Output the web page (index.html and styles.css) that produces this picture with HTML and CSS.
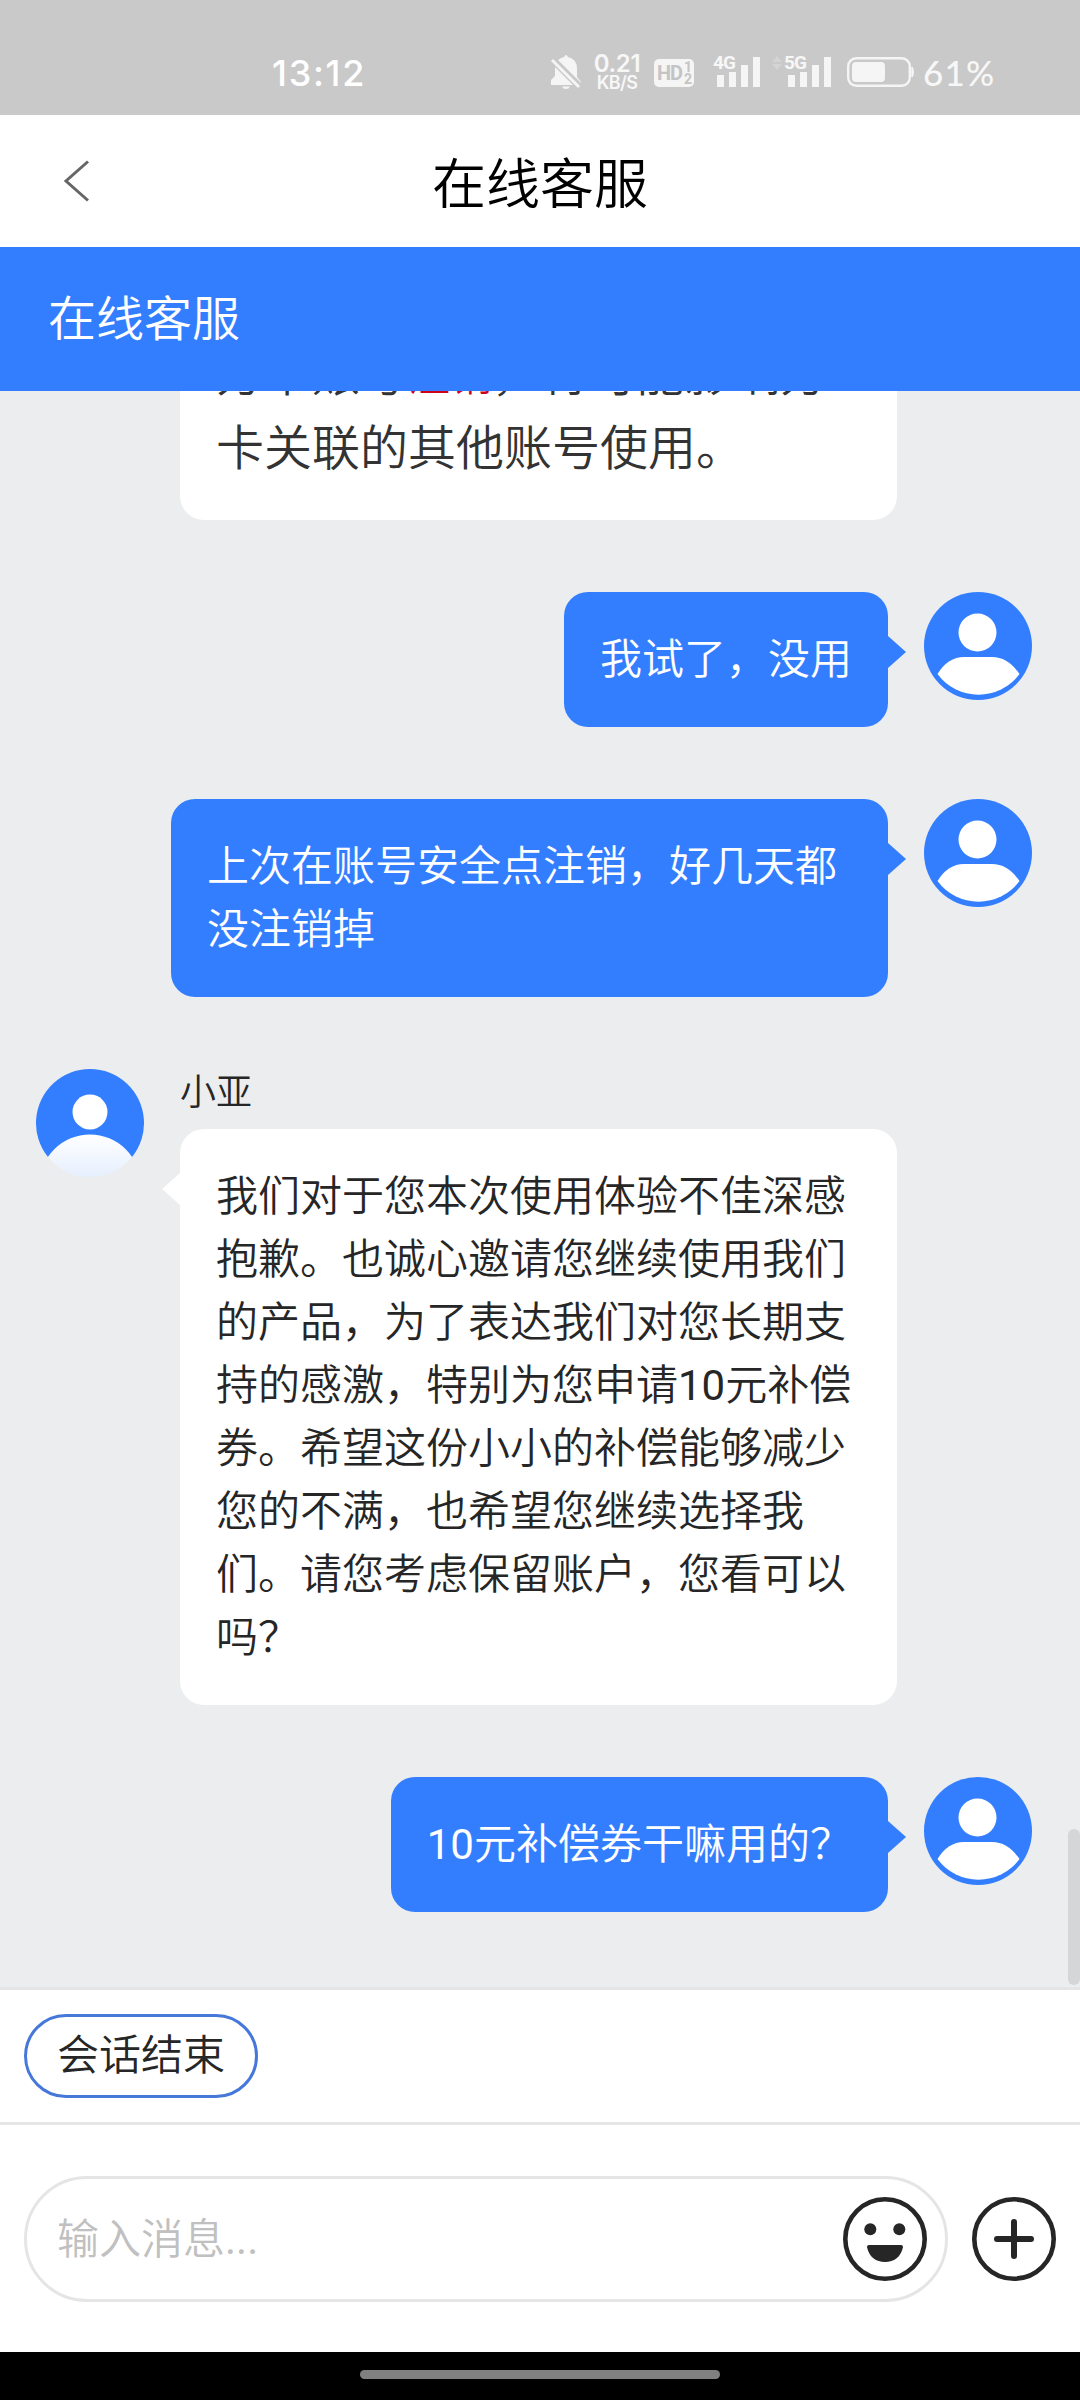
FILE: index.html
```html
<!DOCTYPE html>
<html lang="zh-CN">
<head>
<meta charset="UTF-8">
<title>在线客服</title>
<link rel="stylesheet" href="styles.css">
</head>
<body>
<svg class="defs" aria-hidden="true">
  <defs>
    <clipPath id="disc"><circle cx="54" cy="54" r="54"/></clipPath>
    <linearGradient id="torso" x1="0" y1="65" x2="0" y2="108" gradientUnits="userSpaceOnUse">
      <stop offset="0" stop-color="#fff"/><stop offset="1" stop-color="#e6effe"/>
    </linearGradient>
    <symbol id="user" viewBox="0 0 108 108">
      <circle cx="54" cy="54" r="54" fill="#337eff"/>
      <circle cx="53.500" cy="40.500" r="19" fill="#fff"/>
      <path d="M13.500 82Q24 65 40 65H68Q84 65 95.500 82A51 51 0 0 1 13.500 82Z" fill="#fff"/>
    </symbol>
    <symbol id="agent" viewBox="0 0 108 108">
      <path d="M12 88A54 54 0 1 1 96 88Z" fill="#337eff"/>
      <circle cx="54" cy="43" r="17.500" fill="#fff"/>
      <circle cx="54" cy="116" r="50.500" fill="url(#torso)" clip-path="url(#disc)"/>
    </symbol>
  </defs>
</svg>
<div class="screen">
  <div class="status">
    <span class="clock">13:12</span>
    <svg class="bell" viewBox="0 0 32 36" width="32" height="36">
      <path d="M14 3Q16-1 18 3Q27 5 27 15V23L31 28V31H1V26L5 22V15Q5 5 14 3ZM12 32.500H20Q19 35 16 35Q13 35 12 32.500Z" fill="#f5f5f5"/>
      <path d="M1 4L31 34" stroke="#c9c9c9" stroke-width="7"/>
      <path d="M2 6L29 33" stroke="#f5f5f5" stroke-width="3"/>
    </svg>
    <span class="speed"><span class="rate">0.21</span><span class="unit">KB/S</span></span>
    <span class="hd"><span>HD</span><span class="sims"><i>1</i><i>2</i></span></span>
    <span class="signal first"><b>4G</b><svg viewBox="0 0 44 30" width="44" height="30"><path d="M0 18h7v12H0ZM12 15h7v15h-7ZM24 8h7v22h-7ZM36 0h7v30h-7Z" fill="#f5f5f5"/></svg></span>
    <svg class="updown" viewBox="0 0 10 16" width="10" height="16"><path d="M0 7L5 1L10 7ZM0 9L5 15L10 9Z" fill="#d4d4d4"/></svg>
    <span class="signal"><b>5G</b><svg viewBox="0 0 44 30" width="44" height="30"><path d="M0 18h7v12H0ZM12 15h7v15h-7ZM24 8h7v22h-7ZM36 0h7v30h-7Z" fill="#f5f5f5"/></svg></span>
    <svg class="battery" viewBox="0 0 68 30" width="68" height="30">
      <rect x="1.200" y="1.200" width="61.600" height="27.600" rx="8" fill="none" stroke="#f5f5f5" stroke-width="2.400"/>
      <rect x="5" y="5" width="33" height="20" rx="4" fill="#f5f5f5"/>
      <path d="M65 10Q67.500 15 65 20Z" fill="#f5f5f5" stroke="#f5f5f5" stroke-width="1.500"/>
    </svg>
    <span class="percent">61%</span>
  </div>
  <header class="titlebar">
    <svg class="back" viewBox="0 0 30 42" width="30" height="42"><path d="M26 1.500L4 21L26 40.500" fill="none" stroke="#666" stroke-width="3"/></svg>
    <h1>在线客服</h1>
  </header>
  <div class="banner">在线客服</div>
  <main class="chat">
    <div class="row left tail-end"><div class="bubble large">方卡账号<em>注销</em>，将可能影响方<br>卡关联的其他账号使用。</div></div>
    <div class="row right"><div class="bubble">我试了，没用</div><svg class="avatar"><use href="#user"/></svg></div>
    <div class="row right"><div class="bubble">上次在账号安全点注销，好几天都没注销掉</div><svg class="avatar"><use href="#user"/></svg></div>
    <div class="row left">
      <svg class="avatar"><use href="#agent"/></svg>
      <div class="stack"><div class="name">小亚</div><div class="bubble">我们对于您本次使用体验不佳深感抱歉。也诚心邀请您继续使用我们的产品，为了表达我们对您长期支持的感激，特别为您申请<span class="latin">10</span>元补偿券。希望这份小小的补偿能够减少您的不满，也希望您继续选择我们。请您考虑保留账户，您看可以吗？</div></div>
    </div>
    <div class="row right"><div class="bubble"><span class="latin">10</span>元补偿券干嘛用的？</div><svg class="avatar"><use href="#user"/></svg></div>
    <div class="scrollbar"></div>
  </main>
  <div class="quick"><span class="chip">会话结束</span></div>
  <div class="composer">
    <div class="field"><span class="hint">输入消息<span class="latin">...</span></span>
      <svg viewBox="0 0 84 84" width="84" height="84"><circle cx="42" cy="42" r="39.700" fill="none" stroke="#262626" stroke-width="4.600"/><circle cx="27.300" cy="32.300" r="6" fill="#262626"/><circle cx="56.300" cy="32.300" r="6" fill="#262626"/><path d="M26 48H58Q60 48 60 50C58 60 51 65 42 65S26 60 24 50Q24 48 26 48Z" fill="#262626"/></svg>
    </div>
    <svg viewBox="0 0 84 84" width="84" height="84"><circle cx="42" cy="42" r="39.700" fill="none" stroke="#262626" stroke-width="4.600"/><path d="M25 42H59M42 25V59" stroke="#262626" stroke-width="6" stroke-linecap="round"/></svg>
  </div>
  <div class="navbar"><div class="handle"></div></div>
</div>
</body>
</html>
```
FILE: styles.css
```css
* { box-sizing: border-box; }
body { margin: 0; font-family: Roboto, "Noto Sans CJK SC", sans-serif; font-weight: 350; color: #262626; }
.defs { position: absolute; width: 0; height: 0; }
.screen { width: 1080px; height: 2400px; display: flex; flex-direction: column; overflow: hidden; background: #fff; }
.status { height: 115px; flex: none; display: flex; align-items: flex-start; padding: 55px 80px 0 272px; background: #c9c9c9; color: #f7f7f7; }
.status > * { flex: none; }
.clock { width: 278px; font: 500 36px/36px Inter, sans-serif; letter-spacing: 1.7px; color: #fff; }
.bell { margin-top: -1px; }
.speed { display: flex; flex-direction: column; align-items: center; width: 48px; margin: -2px 0 0 11px; font: 600 24px/21px Inter, sans-serif; }
.rate { letter-spacing: -.3px; }
.unit { font-size: 18px; line-height: 18px; letter-spacing: -.6px; }
.hd { display: flex; justify-content: center; align-items: center; width: 40px; height: 28px; margin: 4px 0 0 13px; border-radius: 5px; background: #f5f5f5; color: #c4c4c4; font: 700 20px/28px Roboto, sans-serif; letter-spacing: -1px; }
.sims { display: flex; flex-direction: column; margin-left: 2px; font-size: 14px; line-height: 12px; }
.sims i { font-style: normal; }
.signal { position: relative; width: 47px; height: 32px; margin-left: 19px; padding: 2px 0 0 4px; }
.signal b { position: absolute; left: 0; top: -1px; font: 700 19px/17px Roboto, sans-serif; letter-spacing: -1px; }
.updown { margin: 0 0 0 12px; }
.updown + .signal { margin-left: 2px; }
.battery { margin: 2px 0 0 16px; }
.percent { margin: -1px 0 0 8px; font: 500 35px/36px Lato, sans-serif; letter-spacing: 1.2px; }
.titlebar { height: 132px; flex: none; display: grid; grid-template-columns: 200px 1fr 200px; align-items: center; }
.back { margin-left: 62px; }
h1 { margin: 0; padding-bottom: 2px; text-align: center; font-size: 54px; font-weight: 350; color: #000; }
.banner { height: 144px; flex: none; padding-left: 48px; background: #337eff; color: #fff; font-size: 48px; line-height: 145px; }
.chat { position: relative; height: 1596px; flex: none; display: flex; flex-direction: column; justify-content: flex-end; gap: 72px; padding-bottom: 75px; overflow: hidden; background: #ebedee; }
.row { display: flex; align-items: flex-start; gap: 36px; padding: 0 48px 0 36px; }
.right { justify-content: flex-end; }
.avatar { width: 108px; height: 108px; flex: none; }
.tail-end { padding-left: 180px; }
.bubble { position: relative; max-width: 717px; padding: 36px; border-radius: 24px; font-size: 42px; line-height: 63px; }
.latin { font-weight: 400; }
.left .bubble { width: 717px; background: #fff; }
.left .large { padding-bottom: 35px; font-size: 48px; line-height: 72px; color: #333; }
.large em { font-style: normal; font-size: 42px; color: #d0021b; }
.right .bubble { background: #337eff; color: #fff; }
.bubble::after { content: ""; position: absolute; top: 44px; border: 16px solid transparent; }
.right .bubble::after { left: 100%; border-left: 18px solid #337eff; border-right: 0; }
.left .bubble::after { right: 100%; border-right: 18px solid #fff; border-left: 0; }
.name { height: 60px; font-size: 36px; line-height: 49px; }
.scrollbar { position: absolute; right: 0; bottom: 2px; width: 12px; height: 156px; border-radius: 6px; background: #d5d6d7; }
.quick { height: 135px; flex: none; display: flex; align-items: flex-start; padding: 24px; border-top: 3px solid #e5e5e5; }
.chip { height: 84px; padding: 0 30px; border: 3px solid #4678da; border-radius: 42px; font-size: 42px; line-height: 78px; }
.composer { height: 230px; flex: none; display: flex; align-items: center; gap: 24px; padding: 0 24px; border-top: 3px solid #e5e5e5; }
.field { width: 924px; height: 126px; display: flex; align-items: center; justify-content: space-between; padding: 0 18px 0 30px; border: 3px solid #e5e5e5; border-radius: 63px; font-size: 42px; color: #c0c0c0; }
.hint { padding-bottom: 7px; }
.navbar { height: 48px; flex: none; display: flex; justify-content: center; padding-top: 18px; background: #000; }
.handle { width: 360px; height: 9px; border-radius: 5px; background: #808080; }
```
